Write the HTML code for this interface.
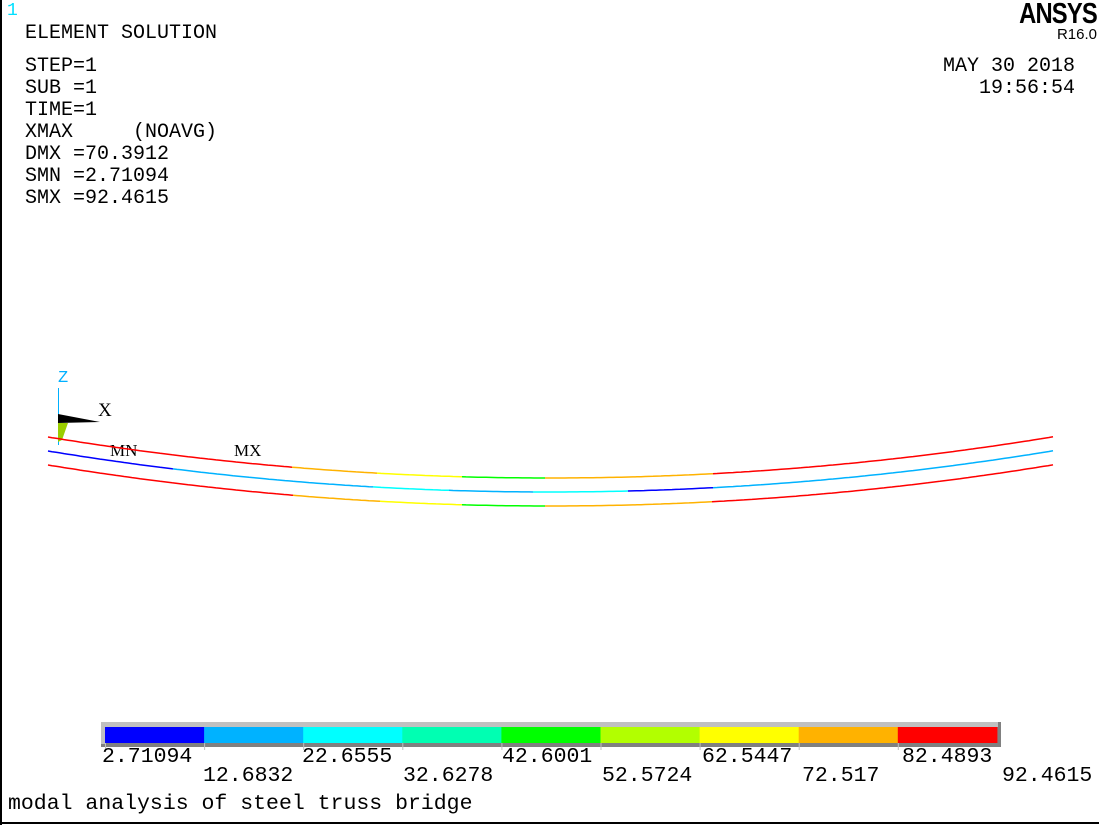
<!DOCTYPE html>
<html><head><meta charset="utf-8"><style>
body{margin:0;width:1099px;height:825px;background:#fff;position:relative;overflow:hidden;font-family:"Liberation Mono",monospace;}
.t{position:absolute;white-space:pre;font-size:20px;line-height:22px;color:#000;}
.b{position:absolute;white-space:pre;font-size:21.5px;line-height:22px;color:#000;}
</style></head><body>
<div style="position:absolute;left:0;top:0;width:2px;height:825px;background:#000"></div>
<div style="position:absolute;left:0;top:822px;width:1099px;height:2px;background:#000"></div>
<div class="t" style="left:7px;top:0px;color:#00e0ff;font-size:18px">1</div>
<div class="t" style="left:25px;top:23px">ELEMENT SOLUTION</div>
<div class="t" style="left:25px;top:56px">STEP=1
SUB =1
TIME=1
XMAX     (NOAVG)
DMX =70.3912
SMN =2.71094
SMX =92.4615</div>
<div class="t" style="right:24px;top:56px;text-align:right">MAY 30 2018
   19:56:54</div>
<div style="position:absolute;right:2px;top:-2px;font-family:'Liberation Sans',sans-serif;font-weight:bold;font-size:29px;letter-spacing:-1px;transform:scaleX(0.82);transform-origin:right;">ANSYS</div>
<div style="position:absolute;right:2px;top:26px;font-family:'Liberation Sans',sans-serif;font-size:15px;">R16.0</div>

<svg width="1099" height="825" style="position:absolute;left:0;top:0" id="s">
<text x="58" y="382" fill="#00b0ff" font-family="Liberation Mono" font-size="17">Z</text>
<line x1="58.5" y1="388" x2="58.5" y2="445" stroke="#00b0ff" stroke-width="1"/>
<polygon points="58,414 100,422 58,423" fill="#000"/>
<text x="98" y="416" fill="#000" font-family="Liberation Serif" font-size="19">X</text>
<polygon points="58,423 68,423 62,440 58,442" fill="#9acd00"/>
<text x="110" y="456" fill="#000" font-family="Liberation Serif" font-size="17">MN</text>
<text x="234" y="456" fill="#000" font-family="Liberation Serif" font-size="17">MX</text>
<g id="curves" fill="none" stroke-width="1.5"></g>
<rect x="101" y="722" width="900" height="25" fill="#808080"/>
<rect x="101" y="722" width="897" height="5" fill="#c0c0c0"/>
<rect x="101" y="722" width="4" height="22" fill="#c0c0c0"/>
<g id="bar"></g>
</svg>
<div class="b" style="left:102px;top:746px">2.71094</div>
<div class="b" style="left:302px;top:746px">22.6555</div>
<div class="b" style="left:502px;top:746px">42.6001</div>
<div class="b" style="left:702px;top:746px">62.5447</div>
<div class="b" style="left:902px;top:746px">82.4893</div>
<div class="b" style="left:203px;top:765px">12.6832</div>
<div class="b" style="left:403px;top:765px">32.6278</div>
<div class="b" style="left:602px;top:765px">52.5724</div>
<div class="b" style="left:802px;top:765px">72.517</div>
<div class="b" style="left:1002px;top:765px">92.4615</div>
<div class="b" style="left:8px;top:793px">modal analysis of steel truss bridge</div>
<script>
var NS="http://www.w3.org/2000/svg";
var cols=["#0000ff","#00b2ff","#00ffff","#00ffb2","#00ff00","#b2ff00","#ffff00","#ffb200","#ff0000"];
var bar=document.getElementById("bar");
for(var i=0;i<9;i++){var r=document.createElementNS(NS,"rect");var x0=105+i*99.1;r.setAttribute("x",x0);r.setAttribute("y",727);r.setAttribute("width",99.6);r.setAttribute("height",16);r.setAttribute("fill",cols[i]);bar.appendChild(r);
var l=document.createElementNS(NS,"line");l.setAttribute("x1",x0+0.5);l.setAttribute("x2",x0+0.5);l.setAttribute("y1",743);l.setAttribute("y2",750);l.setAttribute("stroke","#c0c0c0");bar.appendChild(l);}
var g=document.getElementById("curves");
var k=41/(502*502);
function seg(y0,a,b,c){var d="";for(var x=a;x<=b;x+=4){var xx=Math.min(x,b);var y=y0+41-k*(xx-550)*(xx-550);d+=(d?"L":"M")+xx+","+y.toFixed(1);}
var yb=y0+41-k*(b-550)*(b-550);d+="L"+b+","+yb.toFixed(1);
var p=document.createElementNS(NS,"path");p.setAttribute("d",d);p.setAttribute("stroke",c);g.appendChild(p);}
function curve(y0,s){for(var i=0;i<s.length;i++)seg(y0,s[i][0],s[i][1],s[i][2]);}
curve(437,[[48,292,"#ff0000"],[292,377,"#ffb200"],[377,462,"#ffff00"],[462,545,"#00ff00"],[545,713,"#ffb200"],[713,1053,"#ff0000"]]);
curve(451,[[48,173,"#0000ff"],[173,373,"#00b2ff"],[373,449,"#00ffff"],[449,533,"#00b2ff"],[533,628,"#00ffff"],[628,713,"#0000ff"],[713,1053,"#00b2ff"]]);
curve(465,[[48,293,"#ff0000"],[293,380,"#ffb200"],[380,462,"#ffff00"],[462,545,"#00ff00"],[545,712,"#ffb200"],[712,1053,"#ff0000"]]);
</script>
</body></html>
